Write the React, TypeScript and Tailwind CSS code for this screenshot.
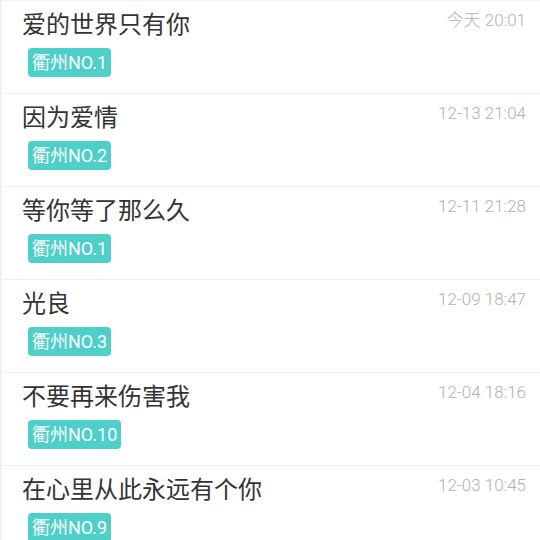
import React from "react";

const rows = [
  { title: "爱的世界只有你", time: "今天 20:01", tag: "衢州NO.1" },
  { title: "因为爱情", time: "12-13 21:04", tag: "衢州NO.2" },
  { title: "等你等了那么久", time: "12-11 21:28", tag: "衢州NO.1" },
  { title: "光良", time: "12-09 18:47", tag: "衢州NO.3" },
  { title: "不要再来伤害我", time: "12-04 18:16", tag: "衢州NO.10" },
  { title: "在心里从此永远有个你", time: "12-03 10:45", tag: "衢州NO.9" },
];

export default function App() {
  return (
    <div
      className="w-[540px] h-[540px] overflow-hidden bg-white border-l-2 border-[#f1f1ee]"
      style={{ fontFamily: "Roboto, 'Noto Sans CJK SC', sans-serif" }}
    >
      <div className="border-t border-[#f3f3f0]">
        {rows.map((r, i) => (
          <div key={i} className="h-[93px] border-b border-[#f0f0ec] flex justify-between pl-[20px] pr-[14px]">
            <div className="flex flex-col">
              <div className="text-[24px] leading-[28px] text-[#333333] mt-[10px]">{r.title}</div>
              <div className="mt-[9px] flex">
                <span className="bg-[#4ecfc9] text-white text-[18px] leading-[29px] h-[29px] px-[4px] rounded-[4px] ml-[6px]">
                  {r.tag}
                </span>
              </div>
            </div>
            <div className="text-[17px] leading-[20px] font-light text-[#b3b3a5] mt-[9px]">{r.time}</div>
          </div>
        ))}
      </div>
    </div>
  );
}
